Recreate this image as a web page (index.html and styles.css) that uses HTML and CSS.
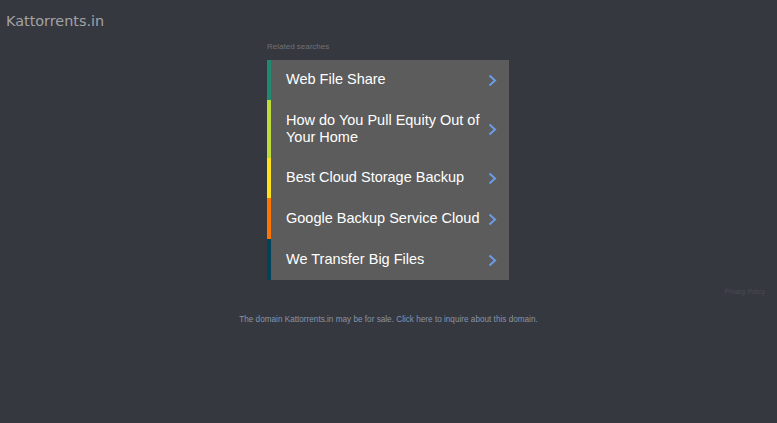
FILE: index.html
```html
<!DOCTYPE html>
<html>
<head>
<meta charset="utf-8">
<link rel="stylesheet" href="styles.css">
</head>
<body>
<header class="top"><span class="domain">Kattorrents.in</span></header>
<main class="content">
  <div class="block">
    <div class="label">Related searches</div>
    <ul class="links">
      <li class="c1"><span class="txt">Web File Share</span><svg class="chev" width="9" height="13" viewBox="0 0 9 13"><path d="M1.5 1.5 L7 6.5 L1.5 11.5" fill="none" stroke="#6b9ce6" stroke-width="2"/></svg></li>
      <li class="c2"><span class="txt">How do You Pull Equity Out of Your Home</span><svg class="chev" width="9" height="13" viewBox="0 0 9 13"><path d="M1.5 1.5 L7 6.5 L1.5 11.5" fill="none" stroke="#6b9ce6" stroke-width="2"/></svg></li>
      <li class="c3"><span class="txt">Best Cloud Storage Backup</span><svg class="chev" width="9" height="13" viewBox="0 0 9 13"><path d="M1.5 1.5 L7 6.5 L1.5 11.5" fill="none" stroke="#6b9ce6" stroke-width="2"/></svg></li>
      <li class="c4"><span class="txt">Google Backup Service Cloud</span><svg class="chev" width="9" height="13" viewBox="0 0 9 13"><path d="M1.5 1.5 L7 6.5 L1.5 11.5" fill="none" stroke="#6b9ce6" stroke-width="2"/></svg></li>
      <li class="c5"><span class="txt">We Transfer Big Files</span><svg class="chev" width="9" height="13" viewBox="0 0 9 13"><path d="M1.5 1.5 L7 6.5 L1.5 11.5" fill="none" stroke="#6b9ce6" stroke-width="2"/></svg></li>
    </ul>
  </div>
  <div class="privacy">Privacy Policy</div>
  <div class="sale">The domain Kattorrents.in may be for sale. Click here to inquire about this domain.</div>
</main>
</body>
</html>
```
FILE: styles.css
```css
html, body {
  margin: 0;
  padding: 0;
  background: #363840;
  height: 100%;
}
body {
  font-family: "Liberation Sans", Arial, sans-serif;
}
.top {
  height: 40px;
  padding-left: 6px;
  display: flex;
  align-items: center;
}
.domain {
  font-family: "DejaVu Sans", sans-serif;
  font-size: 14.4px;
  color: #a3a3a6;
  margin-top: 1px;
}
.content {
  display: flex;
  flex-direction: column;
  align-items: stretch;
}
.block {
  width: 242px;
  margin-left: 267px;
}
.label {
  font-size: 8px;
  color: #6f7177;
  height: 20px;
  line-height: 13px;
}
.links {
  list-style: none;
  margin: 0;
  padding: 0;
  background: #5c5c5c;
}
.links li {
  display: flex;
  align-items: center;
  justify-content: space-between;
  border-left: 4px solid #1f8a70;
  padding: 0 12px 0 15px;
  min-height: 40px;
  box-sizing: border-box;
}
.links li.c2 { border-color: #bedb39; min-height: 58px; }
.links li.c3 { border-color: #ffe11a; }
.links li.c4 { border-color: #fd7400; min-height: 41px; }
.links li.c5 { border-color: #004358; min-height: 41px; }
.txt {
  color: #ffffff;
  font-size: 14.5px;
  line-height: 17px;
  max-width: 200px;
  margin-top: -1px;
}
.chev {
  flex: none;
  margin-top: 1px;
}
.privacy {
  align-self: flex-end;
  margin-right: 12px;
  margin-top: 8px;
  font-size: 6.5px;
  color: #4a4c53;
  height: 12px;
}
.sale {
  text-align: center;
  margin-top: 15px;
  font-size: 8.2px;
  color: #8595a8;
}
```
